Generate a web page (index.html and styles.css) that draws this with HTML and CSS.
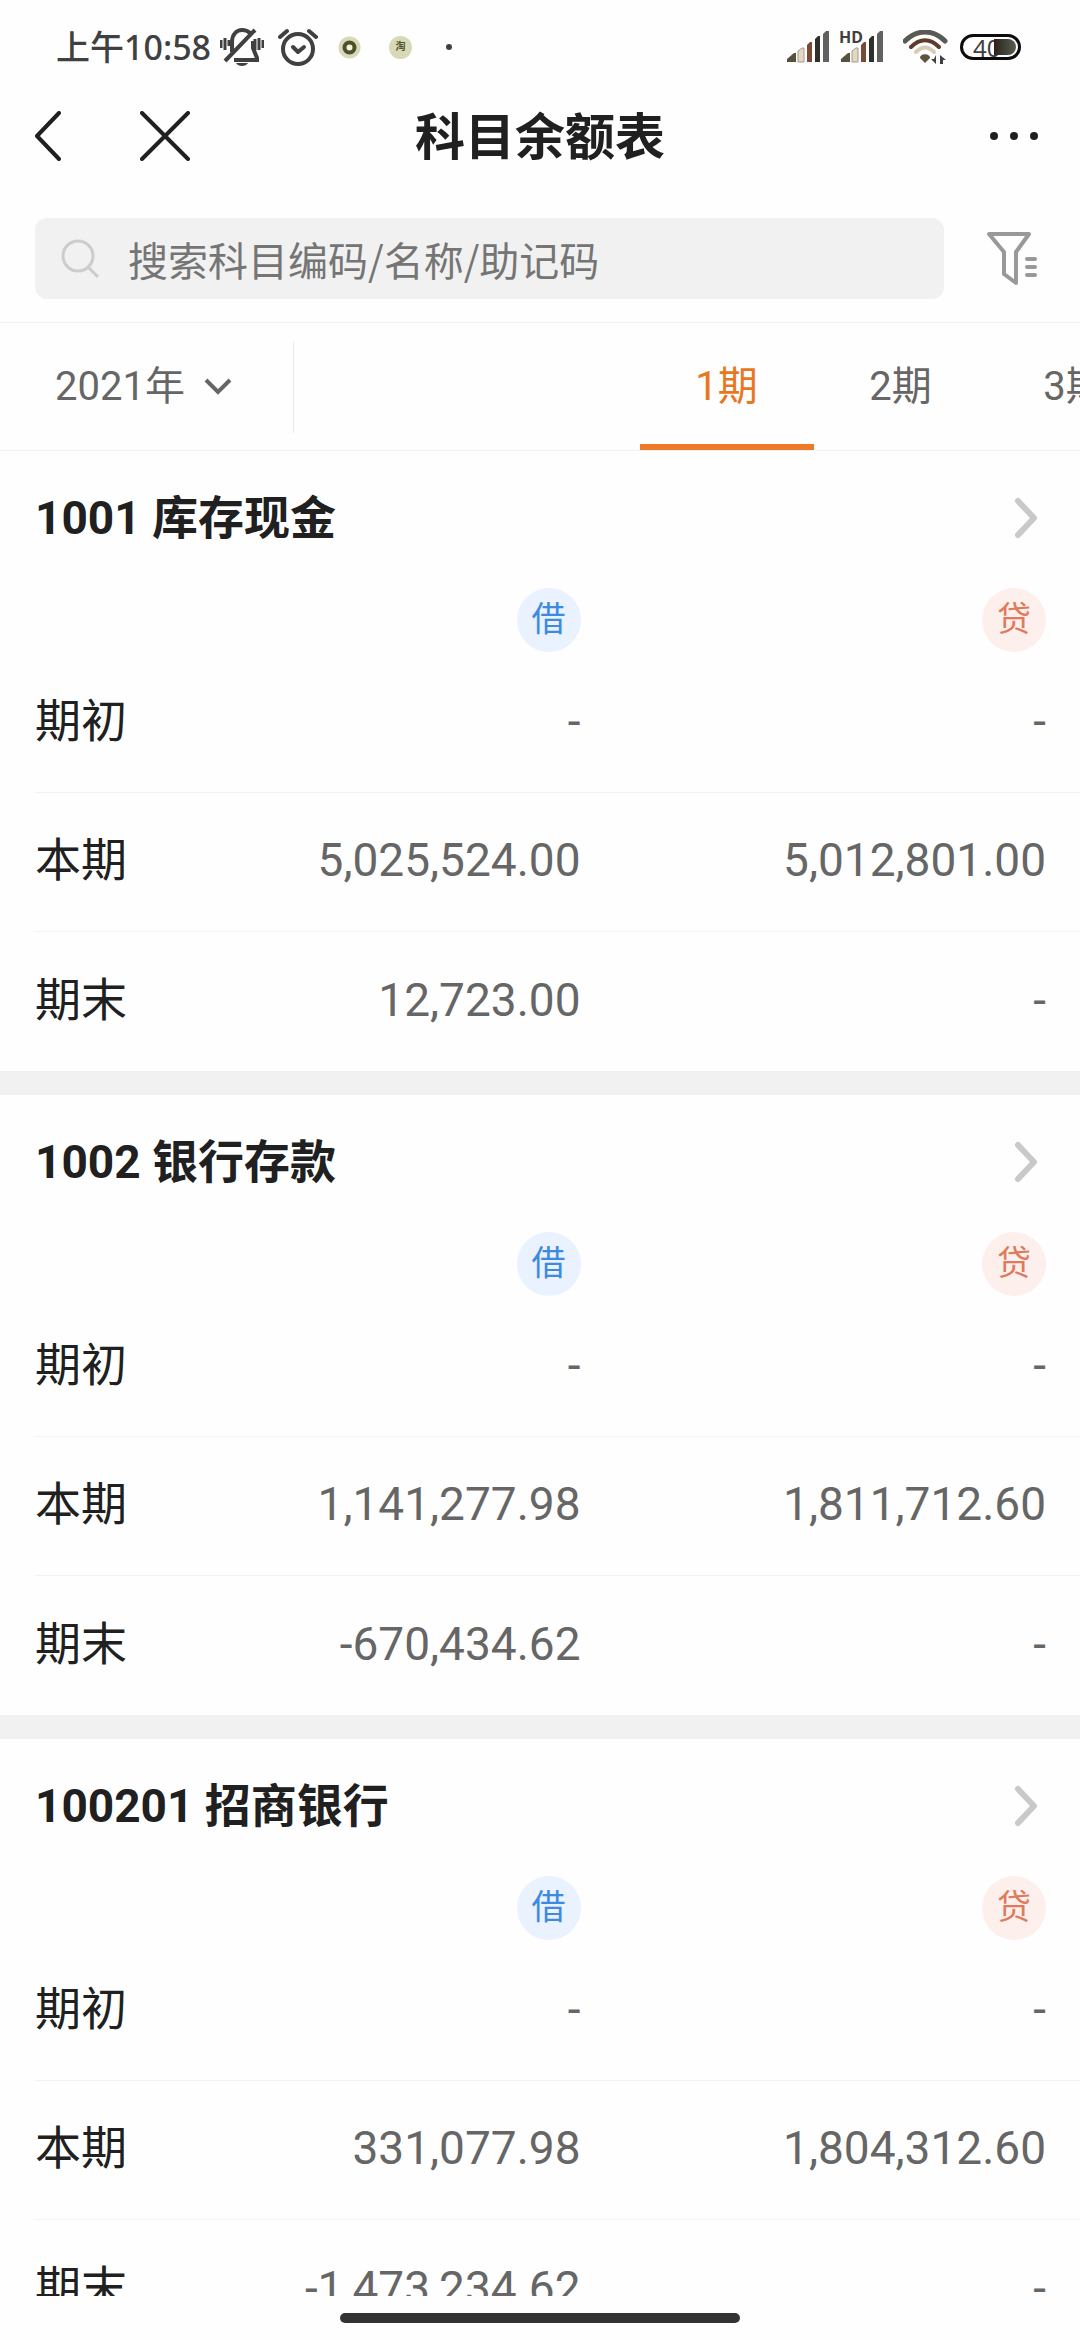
FILE: index.html
```
<!DOCTYPE html>
<html lang="zh-CN">
<head>
  <meta charset="UTF-8" />
  <meta name="viewport" content="width=device-width, initial-scale=1.0"/>
  <title>科目余额表</title>
  <link rel="stylesheet" href="styles.css">
</head>
<body>
  <!-- Status bar -->
  <div class="status-bar">
    <span class="time">上午10:58</span>
    <div class="status-icons">
      <svg width="44" height="38" viewBox="0 0 44 38" fill="none" stroke="#404040" stroke-width="4">
        <path d="M12 24V14C12 6 17 2 22 2c3 0 6 1 8 3M33 13v7l4 10v2H14"/>
        <path d="M5 33L35 2"/>
        <path d="M1 12v8M5 10v12M9 12v6M35 11v11M39 10v12M43 12v8" stroke-width="3"/>
        <path d="M16 35h12c-2 4-10 4-12 0z" fill="#404040" stroke="none"/>
      </svg>
      <svg width="40" height="38" viewBox="0 0 40 38" fill="none" stroke="#404040" stroke-width="4" stroke-linecap="round" stroke-linejoin="round">
        <circle cx="20" cy="21" r="15"/>
        <path d="M15 19l5 5 6-5"/>
        <path d="M2 9l7-6M38 9l-7-6"/>
      </svg>
    </div>
    <div class="notices">
      <svg width="23" height="23" viewBox="0 0 23 23">
        <circle cx="11.500" cy="11.500" r="11" fill="#d8d9b8"/>
        <circle cx="11.500" cy="11.500" r="5" fill="#f3f3dc" stroke="#4e512c" stroke-width="4"/>
      </svg>
      <span class="notice-badge">淘</span>
      <span class="notice-dot"></span>
    </div>
    <div class="signals">
      <svg width="42" height="32" viewBox="0 0 42 32">
        <path d="M0 31v-3l7-6h2v9z" fill="#55513d"/>
        <path d="M11 31V20l4-3h2v14z" fill="#e4d8c4" stroke="#a49a8c" stroke-width="1"/>
        <path d="M20 31V14l3-3h2v20z" fill="#7b4a33"/>
        <path d="M28 31V8l3-3h2v26z" fill="#30302b"/>
        <path d="M36 31V3l3-3h3v31z" fill="#60625f"/>
      </svg>
      <div class="signal-hd">
        <svg width="42" height="32" viewBox="0 0 42 32">
          <path d="M0 31v-3l7-6h2v9z" fill="#55513d"/>
          <path d="M11 31V20l4-3h2v14z" fill="#e4d8c4" stroke="#a49a8c" stroke-width="1"/>
          <path d="M20 31V14l3-3h2v20z" fill="#7b4a33"/>
          <path d="M28 31V8l3-3h2v26z" fill="#30302b"/>
          <path d="M36 31V3l3-3h3v31z" fill="#60625f"/>
        </svg>
        <span class="hd">HD</span>
      </div>
      <svg class="wifi" width="45" height="34" viewBox="0 0 45 34" fill="none" stroke-linecap="round">
        <path d="M2 11C14-1 30-1 42 11" stroke="#5a5a55" stroke-width="5"/>
        <path d="M8 17C17 8 27 8 36 17" stroke="#5f3b2b" stroke-width="4"/>
        <path d="M13 22C19 16 25 16 31 22" stroke="#d8cdb4" stroke-width="4"/>
        <path d="M17 28c0-5 10-5 10 0l-5 5z" fill="#5f553f"/>
        <path d="M33 25v9l-5-5h3zM37 34v-9l6 5h-3v4z" fill="#404040"/>
      </svg>
      <div class="battery">
        <span>40</span>
        <i class="battery-level"></i>
      </div>
    </div>
  </div>

  <!-- Title bar -->
  <header class="title-bar">
    <div class="title-actions">
      <button class="icon-btn" aria-label="返回">
        <svg width="28" height="50" viewBox="0 0 28 50" fill="none" stroke="#202020" stroke-width="4" stroke-linecap="round" stroke-linejoin="round">
          <path d="M25 2L3 25l22 23"/>
        </svg>
      </button>
      <button class="icon-btn" aria-label="关闭">
        <svg width="50" height="50" viewBox="0 0 50 50" fill="none" stroke="#202020" stroke-width="4" stroke-linecap="round">
          <path d="M2 2l46 46M48 2L2 48"/>
        </svg>
      </button>
    </div>
    <h1>科目余额表</h1>
    <button class="icon-btn more" aria-label="更多">
      <svg width="48" height="10" viewBox="0 0 48 10" fill="#202020">
        <circle cx="4" cy="5" r="4"/>
        <circle cx="24" cy="5" r="4"/>
        <circle cx="44" cy="5" r="4"/>
      </svg>
    </button>
  </header>

  <!-- Search -->
  <form class="search-row">
    <label class="search-box">
      <svg width="40" height="40" viewBox="0 0 40 40" fill="none" stroke="#cccccc" stroke-width="3">
        <circle cx="18" cy="17" r="15"/>
        <path d="M28 28l10 10"/>
      </svg>
      <input type="text" placeholder="搜索科目编码/名称/助记码" aria-label="搜索科目">
    </label>
    <button type="button" class="icon-btn" aria-label="筛选">
      <svg width="52" height="54" viewBox="0 0 52 54" fill="none" stroke="#999999" stroke-width="4" stroke-linecap="round" stroke-linejoin="round">
        <path d="M3 2h40L30 20v31l-12-9V20z"/>
        <path d="M41 27h8M41 35h8M41 43h8"/>
      </svg>
    </button>
  </form>

  <!-- Period picker -->
  <div class="period-bar">
    <div class="year">
      <select aria-label="年度">
        <option>2021年</option>
      </select>
      <svg class="year-arrow" width="28" height="18" viewBox="0 0 28 18" fill="none" stroke="#666666" stroke-width="4">
        <path d="M2 2l12 12L26 2"/>
      </svg>
    </div>
    <nav class="periods">
      <button class="period active">1期</button>
      <button class="period">2期</button>
      <button class="period">3期</button>
    </nav>
  </div>

  <!-- Accounts -->
  <main class="accounts">
    <section class="account">
      <a class="account-title" href="#">
        <h2>1001 库存现金</h2>
        <svg width="24" height="42" viewBox="0 0 24 42" fill="none" stroke="#c9c9c9" stroke-width="6" stroke-linecap="round" stroke-linejoin="round">
          <path d="M4 4l16 17L4 38"/>
        </svg>
      </a>
      <table>
        <thead>
          <tr><td></td><th><span class="badge debit">借</span></th><th><span class="badge credit">贷</span></th></tr>
        </thead>
        <tbody>
          <tr><th>期初</th><td>-</td><td>-</td></tr>
          <tr><th>本期</th><td>5,025,524.00</td><td>5,012,801.00</td></tr>
          <tr><th>期末</th><td>12,723.00</td><td>-</td></tr>
        </tbody>
      </table>
    </section>

    <section class="account">
      <a class="account-title" href="#">
        <h2>1002 银行存款</h2>
        <svg width="24" height="42" viewBox="0 0 24 42" fill="none" stroke="#c9c9c9" stroke-width="6" stroke-linecap="round" stroke-linejoin="round">
          <path d="M4 4l16 17L4 38"/>
        </svg>
      </a>
      <table>
        <thead>
          <tr><td></td><th><span class="badge debit">借</span></th><th><span class="badge credit">贷</span></th></tr>
        </thead>
        <tbody>
          <tr><th>期初</th><td>-</td><td>-</td></tr>
          <tr><th>本期</th><td>1,141,277.98</td><td>1,811,712.60</td></tr>
          <tr><th>期末</th><td>-670,434.62</td><td>-</td></tr>
        </tbody>
      </table>
    </section>

    <section class="account">
      <a class="account-title" href="#">
        <h2>100201 招商银行</h2>
        <svg width="24" height="42" viewBox="0 0 24 42" fill="none" stroke="#c9c9c9" stroke-width="6" stroke-linecap="round" stroke-linejoin="round">
          <path d="M4 4l16 17L4 38"/>
        </svg>
      </a>
      <table>
        <thead>
          <tr><td></td><th><span class="badge debit">借</span></th><th><span class="badge credit">贷</span></th></tr>
        </thead>
        <tbody>
          <tr><th>期初</th><td>-</td><td>-</td></tr>
          <tr><th>本期</th><td>331,077.98</td><td>1,804,312.60</td></tr>
          <tr><th>期末</th><td>-1,473,234.62</td><td>-</td></tr>
        </tbody>
      </table>
    </section>
  </main>

  <footer class="home-area">
    <div class="home-bar"></div>
  </footer>
</body>
</html>
```
FILE: styles.css
```
* {
  box-sizing: border-box;
}

body {
  margin: 0;
  height: 100vh;
  display: flex;
  flex-direction: column;
  overflow: hidden;
  font-family: Roboto, "Noto Sans CJK SC", sans-serif;
  background-color: #fefefe;
  color: #202020;
}

svg {
  display: block;
  flex-shrink: 0;
}

button,
input,
select {
  font-family: inherit;
  border: none;
  background: none;
  padding: 0;
}

.icon-btn {
  cursor: pointer;
}

/* Status bar */
.status-bar {
  display: flex;
  align-items: center;
  flex-shrink: 0;
  height: 94px;
  padding: 0 59px 0 56px;
  color: #404040;
}

.time {
  font-family: "Noto Sans", "Noto Sans CJK SC", sans-serif;
  font-size: 34px;
  font-weight: 500;
  line-height: 40px;
}

.status-icons {
  display: flex;
  gap: 14px;
  margin-left: 9px;
}

.notices {
  display: flex;
  align-items: center;
  gap: 28px;
  margin-left: 20px;
}

.notice-badge {
  width: 23px;
  height: 23px;
  border-radius: 50%;
  background-color: #d8d9b8;
  color: #4e512c;
  font-size: 10px;
  font-weight: bold;
  line-height: 22px;
  text-align: center;
}

.notice-dot {
  width: 6px;
  height: 6px;
  margin-left: 6px;
  border-radius: 50%;
  background-color: #404040;
}

.signals {
  display: flex;
  align-items: center;
  gap: 12px;
  margin-left: auto;
}

.wifi {
  margin-left: 8px;
}

.signal-hd {
  position: relative;
}

.hd {
  position: absolute;
  top: 0;
  left: -2px;
  font-family: "Noto Sans", sans-serif;
  font-size: 16px;
  font-weight: bold;
  line-height: 12px;
}

.battery {
  position: relative;
  width: 61px;
  height: 26px;
  padding-left: 10px;
  border: 3px solid #0c0c0c;
  border-radius: 13px;
  font-family: "Noto Sans", sans-serif;
  font-size: 24px;
  line-height: 21px;
}

.battery-level {
  position: absolute;
  top: 2px;
  right: 2px;
  width: 22px;
  height: 16px;
  border-radius: 0 8px 8px 0;
  background: linear-gradient(to right, #3a1a10, #35362d 30%, #575c50);
}

/* Title bar */
.title-bar {
  display: grid;
  grid-template-columns: 1fr auto 1fr;
  align-items: center;
  flex-shrink: 0;
  height: 84px;
  padding: 0 34px;
}

.title-actions {
  display: flex;
  gap: 78px;
}

.title-bar h1 {
  margin: 0;
  padding-top: 4px;
  font-size: 50px;
  font-weight: bold;
  line-height: 60px;
}

.more {
  justify-self: end;
  margin-right: 8px;
}

/* Search */
.search-row {
  display: flex;
  align-items: center;
  flex-shrink: 0;
  gap: 42px;
  padding: 40px 42px 23px 35px;
  border-bottom: 1px solid #f1f1f1;
}

.search-box {
  display: flex;
  align-items: center;
  flex: 1;
  gap: 28px;
  height: 81px;
  padding: 0 25px;
  border-radius: 12px;
  background-color: #f1f1f1;
}

.search-box input {
  flex: 1;
  min-width: 0;
  font-family: "Noto Sans CJK SC", sans-serif;
  font-size: 40px;
  line-height: 60px;
  color: #202020;
  outline: none;
}

.search-box input::placeholder {
  color: #757575;
}

/* Period picker */
.period-bar {
  display: flex;
  align-items: center;
  flex-shrink: 0;
  height: 128px;
  border-bottom: 1px solid #f1f1f1;
}

.year {
  position: relative;
  display: flex;
  align-items: center;
  height: 92px;
  padding: 0 62px 0 55px;
  border-right: 1px solid #ebebeb;
}

.year select {
  appearance: none;
  padding-right: 46px;
  font-size: 40px;
  line-height: 60px;
  color: #666666;
}

.year-arrow {
  position: absolute;
  right: 61px;
  pointer-events: none;
}

.periods {
  display: flex;
  align-self: stretch;
  flex: 1;
  min-width: 0;
  padding-left: 32%;
  overflow: hidden;
}

.period {
  flex: 0 0 174px;
  padding-bottom: 2px;
  border-bottom: 6px solid transparent;
  font-size: 40px;
  color: #666666;
  cursor: pointer;
}

.period.active {
  color: #e87722;
  border-bottom-color: #ee7a27;
}

/* Accounts */
.accounts {
  flex: 1;
  min-height: 0;
  overflow-y: auto;
  scrollbar-width: none;
}

.account + .account {
  border-top: 24px solid #f1f1f1;
}

.account-title {
  display: flex;
  align-items: center;
  justify-content: space-between;
  height: 134px;
  padding: 0 42px 0 35px;
  color: inherit;
  text-decoration: none;
}

.account-title h2 {
  margin: 0;
  font-size: 46px;
  font-weight: bold;
  line-height: 60px;
}

.account table {
  width: calc(100% - 35px);
  margin-left: 35px;
  table-layout: fixed;
  border-spacing: 0;
}

.account td,
.account th {
  padding: 0 34px 0 0;
  font-size: 46px;
  font-weight: normal;
  line-height: 60px;
  text-align: right;
}

.account tbody td,
.account tbody th {
  height: 139px;
  padding-bottom: 4px;
  border-bottom: 1px solid #f3f3f3;
}

.account tbody tr:last-child > * {
  border-bottom: none;
}

.account thead td {
  width: 114px;
}

.account thead th {
  height: 69px;
}

.account tbody th {
  padding-right: 0;
  text-align: left;
}

.account tbody td {
  color: #666666;
}

.badge {
  display: block;
  width: 64px;
  height: 64px;
  margin-left: auto;
  border-radius: 50%;
  font-size: 34px;
  line-height: 62px;
  text-align: center;
}

.debit {
  background-color: #e9f2fe;
  color: #3d8adf;
}

.credit {
  background-color: #fdf0ec;
  color: #e07a5c;
}

/* Bottom gesture bar */
.home-area {
  display: flex;
  justify-content: center;
  flex-shrink: 0;
  height: 44px;
  padding-top: 17px;
}

.home-bar {
  width: 37%;
  height: 10px;
  border-radius: 5px;
  background-color: #333333;
}
```
